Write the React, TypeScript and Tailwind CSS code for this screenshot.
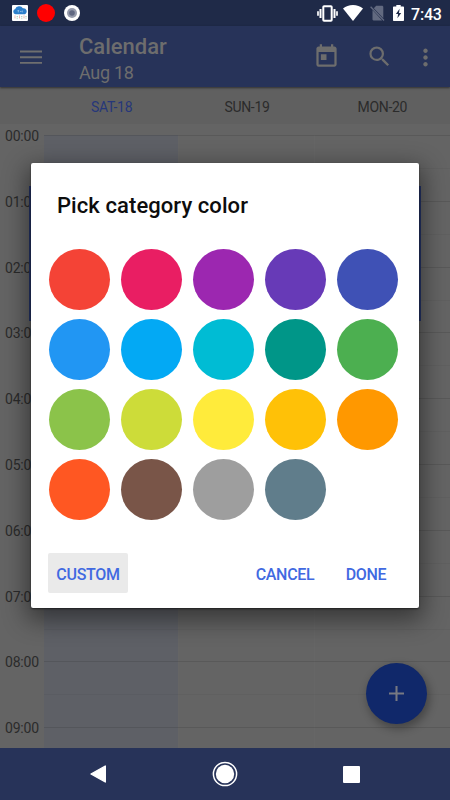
import React from 'react';
import { MdMoreVert, MdSearch, MdToday } from 'react-icons/md';

const COLORS = [
  { name: 'red', bg: 'bg-[#f44336]' },
  { name: 'pink', bg: 'bg-[#e91e63]' },
  { name: 'purple', bg: 'bg-[#9c27b0]' },
  { name: 'deep-purple', bg: 'bg-[#673ab7]' },
  { name: 'indigo', bg: 'bg-[#3f51b5]' },
  { name: 'blue', bg: 'bg-[#2196f3]' },
  { name: 'light-blue', bg: 'bg-[#03a9f4]' },
  { name: 'cyan', bg: 'bg-[#00bcd4]' },
  { name: 'teal', bg: 'bg-[#009688]' },
  { name: 'green', bg: 'bg-[#4caf50]' },
  { name: 'light-green', bg: 'bg-[#8bc34a]' },
  { name: 'lime', bg: 'bg-[#cddc39]' },
  { name: 'yellow', bg: 'bg-[#ffeb3b]' },
  { name: 'amber', bg: 'bg-[#ffc107]' },
  { name: 'orange', bg: 'bg-[#ff9800]' },
  { name: 'deep-orange', bg: 'bg-[#ff5722]' },
  { name: 'brown', bg: 'bg-[#795548]' },
  { name: 'grey', bg: 'bg-[#9e9e9e]' },
  { name: 'blue-grey', bg: 'bg-[#607d8b]' },
];

const HOURS = ['00:00', '01:00', '02:00', '03:00', '04:00', '05:00', '06:00', '07:00', '08:00', '09:00'];

function StatusBar() {
  return (
    <div className="h-[26px] shrink-0 bg-[#1f2a48] flex items-center text-white">
      <svg className="ml-3 w-4 h-4" viewBox="0 0 16 16">
        <rect width="16" height="16" rx="1" fill="#fff" />
        <path d="M3.500 9.200a2.600 2.600 0 0 1-.3-5.100A4.300 4.300 0 0 1 10.900 3.200a3.200 3.200 0 0 1 2 6z" fill="#2c7fcb" />
        <path d="M5.500 5.600h1.600M6.300 5.600v1.800M8 6.500h1.500M10.300 5.500v1.900" stroke="#a7cdec" strokeWidth=".7" />
        <path d="M3 10.600v3M7.500 10.600v3M12 10.600v3" stroke="#d98a8a" strokeWidth=".9" strokeDasharray="1 .7" />
        <path d="M5.200 11v3.500M9.800 11v3.500M14 11v2.500" stroke="#8fc0a0" strokeWidth=".9" strokeDasharray="1 .7" />
      </svg>
      <span className="ml-[9px] w-[18px] h-[18px] rounded-full bg-[#ff0000]" />
      <svg className="ml-[9px] w-4 h-4" viewBox="0 0 16 16">
        <circle cx="8" cy="8" r="8" fill="#fff" />
        <circle cx="8" cy="8" r="5" fill="#969bac" />
        <circle cx="8" cy="8" r="2.800" fill="#5f6781" />
      </svg>

      <svg className="ml-auto w-[21px] h-[17px]" viewBox="0 0 21 17">
        <rect x="6.300" y="1.300" width="8.400" height="14.400" rx=".8" fill="none" stroke="#fff" strokeWidth="2" />
        <path d="M3.500 4v9M17.500 4v9" stroke="#fff" strokeWidth="2" />
        <path d="M1 6.200v4.600M20 6.200v4.600" stroke="#fff" strokeWidth="1.700" />
      </svg>
      <svg className="ml-[5px] w-5 h-4" viewBox="0 0 20 16">
        <path d="M10 16 0 3.600C2.700 1.400 6.200 0 10 0s7.300 1.400 10 3.600z" fill="#fff" />
      </svg>
      <svg className="ml-[7px] w-[15px] h-4" viewBox="0 0 15 16">
        <path d="M6.200.8H12c.8 0 1.300.6 1.300 1.300v11.200L3.800 3.300zM2.500 5l9.700 10.400H3.500c-.7 0-1-.5-1-1.100z" fill="#626a80" />
        <path d="M.6 1.800 14 15.500" stroke="#626a80" strokeWidth="1.300" />
      </svg>
      <svg className="ml-[8px] w-[11px] h-4" viewBox="0 0 11 16">
        <path d="M3.300 0h4.400v1.500H10c.6 0 1 .4 1 1V15c0 .6-.4 1-1 1H1c-.6 0-1-.4-1-1V2.500c0-.6.4-1 1-1h2.300z" fill="#fff" />
        <path d="M6.600 3.800 2.900 9h2.200l-.7 4.200L8.200 8H6z" fill="#1f2a48" />
      </svg>
      <span className="ml-[7px] mr-[8px] mt-[3px] w-[31px] text-[16px] leading-none tracking-[-0.2px] font-medium whitespace-nowrap">7:43</span>
    </div>
  );
}

function AppBar() {
  return (
    <header className="h-[61px] shrink-0 bg-[#273359] text-[#6d6d6d] flex items-center shadow-[0_1px_2px_rgba(0,0,0,0.5)] z-10">
      <svg className="ml-5 w-[22px] h-[14px]" viewBox="0 0 22 14">
        <path d="M0 1.500h22M0 7.200h22M0 12.900h22" stroke="#6f6f6f" strokeWidth="1.900" />
      </svg>
      <div className="ml-[37px] pt-[6px] flex flex-col">
        <h1 className="text-[22px] leading-[26px] font-medium">Calendar</h1>
        <span className="text-[18px] leading-[26px] tracking-[-0.3px]">Aug 18</span>
      </div>
      <div className="ml-auto pr-[11px] flex items-center text-[#6d6d6d]">
        <MdToday className="w-[27px] h-[27px]" />
        <MdSearch className="ml-[26px] w-[27px] h-[27px]" />
        <MdMoreVert className="ml-[19px] mt-px w-[27px] h-[27px]" />
      </div>
    </header>
  );
}

function CalendarGrid() {
  return (
    <>
      <div className="h-[37px] shrink-0 bg-[#606060] pl-11 pt-[3px] grid grid-cols-3 items-center text-center text-[14px] tracking-[-0.3px] text-[#2b2b2b]">
        <span className="text-[#26377a]">SAT-18</span>
        <span>SUN-19</span>
        <span>MON-20</span>
      </div>
      <div className="relative flex-1 min-h-0 overflow-hidden bg-[#646464] flex pt-[11px]">
        <div className="w-11 shrink-0 -mt-[9px] text-[14px] leading-5 tracking-[-0.2px] text-[#2b2b2b]">
          {HOURS.map(h => (
            <div key={h} className="h-[65.8px] pl-[5px]">{h}</div>
          ))}
        </div>
        <div className="relative flex-1">
          <div className="absolute inset-x-0 top-0 bottom-0 grid grid-cols-3">
            <div className="bg-[#5e6066] border-r border-[#656565]" />
            <div className="border-r border-[#666666]" />
            <div />
          </div>
          <div className="relative">
            {HOURS.map(h => (
              <div key={h} className="h-[65.8px] border-t border-black/10">
                <div className="h-[33px] border-b border-black/4" />
              </div>
            ))}
          </div>
        </div>
        {/* event block, mostly hidden behind the dialog */}
        <div className="absolute left-[29px] top-[62px] w-[392px] h-[135px] bg-[#27366a]" />
      </div>
    </>
  );
}

function NavBar() {
  return (
    <nav className="h-[52px] shrink-0 bg-[#273359] flex items-center justify-between pl-[90px] pr-[90px]">
      <svg className="w-4 h-[18px]" viewBox="0 0 16 18">
        <path d="M15.300 1v16L1 9z" fill="#fff" stroke="#fff" strokeWidth="1.400" strokeLinejoin="round" />
      </svg>
      <svg className="w-[26px] h-[26px]" viewBox="0 0 26 26">
        <circle cx="13" cy="13" r="11.600" fill="none" stroke="#fff" strokeWidth="1.500" />
        <circle cx="13" cy="13" r="9.200" fill="#fff" />
      </svg>
      <span className="w-[17px] h-[17px] rounded-[1px] bg-white" />
    </nav>
  );
}

function ColorDialog() {
  return (
    <div className="absolute left-[31px] top-[163px] z-30 w-[388px] h-[445px] rounded-[2px] bg-white shadow-[0_8px_24px_4px_rgba(0,0,0,0.45),0_1px_2px_rgba(0,0,0,0.5)] flex flex-col">
      <h2 className="pl-[26px] pt-[30px] text-[22px] leading-[26px] tracking-[0.080px] font-medium text-[#0d0d0d]">Pick category color</h2>
      <div className="mt-[30.400px] pl-[18px] grid grid-cols-[repeat(5,61px)] gap-x-[11.100px] gap-y-[9px]">
        {COLORS.map(c => (
          <button key={c.name} aria-label={c.name} className={`w-[61px] h-[61px] rounded-full ${c.bg}`} />
        ))}
      </div>
      <div className="mt-auto mb-[15px] pl-[17px] pr-[24px] flex items-center text-[16px] tracking-[-0.3px] font-medium text-[#4169e1]">
        <button className="w-[80px] h-10 pt-[3px] rounded-[2px] bg-[#eaeaea]">CUSTOM</button>
        <button className="ml-auto w-[76px] h-10 pt-[3px]">CANCEL</button>
        <button className="ml-[14px] w-[58px] h-10 pt-[3px]">DONE</button>
      </div>
    </div>
  );
}

export default function App() {
  return (
    <div className="relative w-[450px] h-[800px] overflow-hidden flex flex-col bg-[#646464] font-[Roboto,sans-serif]">
      <StatusBar />
      <AppBar />
      <CalendarGrid />
      <NavBar />
      <button
        aria-label="Add event"
        className="absolute left-[366px] top-[663px] z-20 w-[61px] h-[61px] rounded-full bg-[#10286a] shadow-[2px_4px_8px_1px_rgba(0,0,0,0.3)] flex items-center justify-center"
      >
        <svg className="w-[15px] h-[15px]" viewBox="0 0 16 16">
          <path d="M8 0v16M0 8h16" stroke="#777982" strokeWidth="2.200" />
        </svg>
      </button>
      <ColorDialog />
    </div>
  );
}
